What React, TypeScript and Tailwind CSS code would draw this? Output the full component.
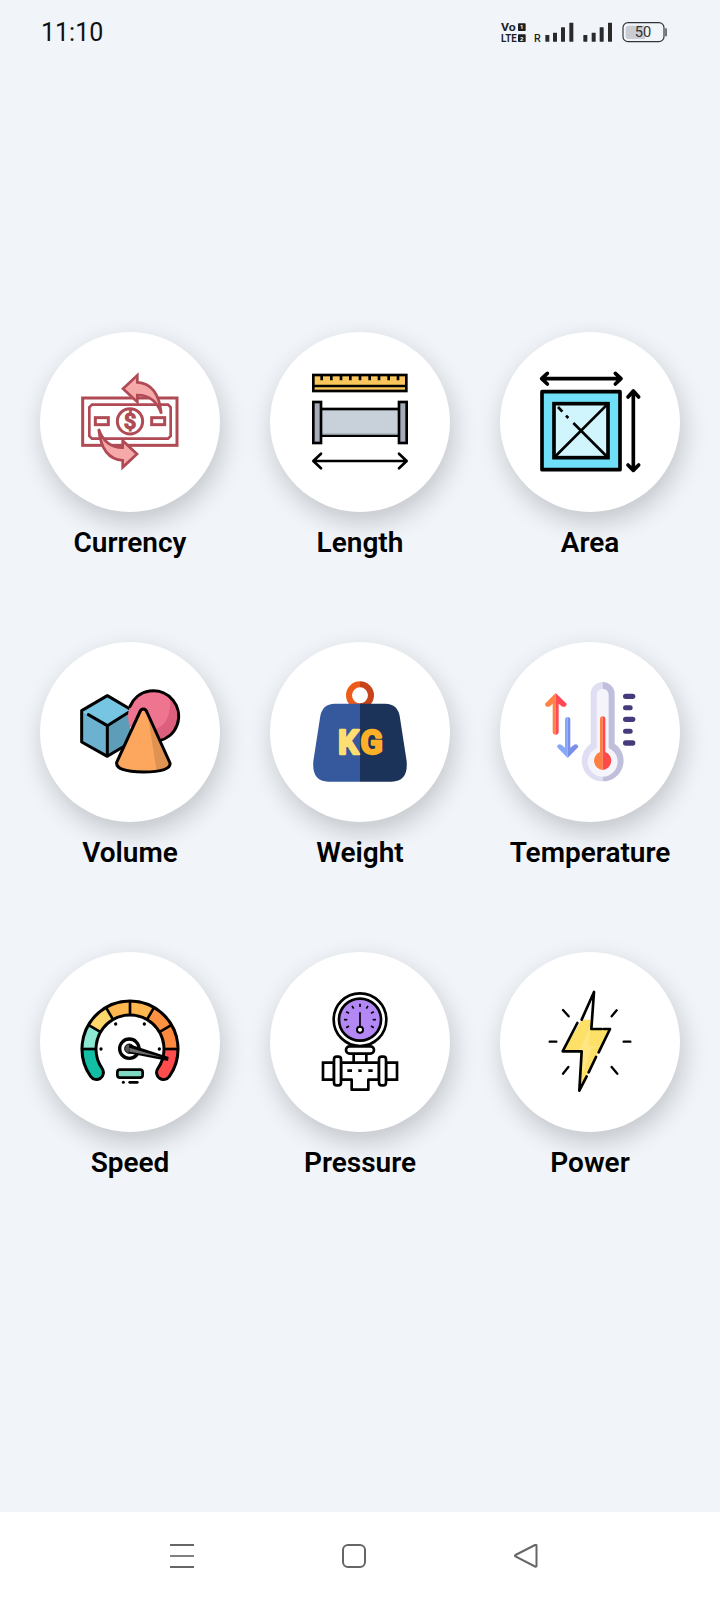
import React from "react";

const VB = "30 37 540 540";
const Svg = ({ children }: { children: React.ReactNode }) => (
  <svg viewBox={VB} className="block w-[180px] h-[180px]">{children}</svg>
);

const Currency = () => {
  const c = "#b04a55";
  const arrow = "M279 207 L322 167 L322 188 Q385 192 394 282 Q375 226 322 226 L322 247 Z";
  return (
    <Svg>
      <rect x="158" y="235" width="283" height="142" fill="#fff" stroke={c} strokeWidth="9" />
      <path d="M186 255 H414 L422 263 V349 L414 357 H186 L178 349 V263 Z" fill="#fff" stroke={c} strokeWidth="8" />
      <circle cx="300" cy="305" r="38" fill="#fff" stroke={c} strokeWidth="9" />
      <text x="300" y="329" textAnchor="middle" fontSize="66" fill={c} stroke={c} strokeWidth="3" className="font-['Roboto'] font-bold">$</text>
      <rect x="196" y="294" width="39" height="21" fill="#fff" stroke={c} strokeWidth="9" />
      <rect x="365" y="294" width="39" height="21" fill="#fff" stroke={c} strokeWidth="9" />
      <path d={arrow} fill="#f5aaa9" stroke={c} strokeWidth="8" strokeLinejoin="miter" />
      <path d={arrow} transform="rotate(180 300 305)" fill="#f5aaa9" stroke={c} strokeWidth="8" strokeLinejoin="miter" />
    </Svg>
  );
};

const Length = () => (
  <Svg>
    <rect x="160" y="166" width="279" height="48" fill="#fbc75c" stroke="#000" strokeWidth="8" />
    <path d="M160 199 H439" stroke="#000" strokeWidth="7" />
    <path d="M185 168 V182 M214 168 V182 M243 168 V182 M271 168 V182 M300 168 V182 M329 168 V182 M357 168 V182 M386 168 V182 M414 168 V182" stroke="#000" strokeWidth="8" />
    <rect x="180" y="268" width="240" height="80" fill="#c8d0d9" stroke="#000" strokeWidth="8" />
    <path d="M183 343 H417" stroke="#a4acb6" strokeWidth="4" />
    <rect x="160" y="247" width="23" height="123" fill="#a5acb8" stroke="#000" strokeWidth="8" />
    <rect x="417" y="247" width="23" height="123" fill="#a5acb8" stroke="#000" strokeWidth="8" />
    <path d="M161 424 H439 M183 402 L160 424 L183 446 M417 402 L440 424 L417 446" fill="none" stroke="#000" strokeWidth="8" strokeLinecap="round" strokeLinejoin="round" />
  </Svg>
);

const Area = () => (
  <Svg>
    <rect x="156" y="216" width="234" height="234" fill="#6fe0f7" stroke="#000" strokeWidth="11" strokeLinejoin="round" />
    <rect x="192" y="252" width="162" height="162" fill="#d1f5fd" stroke="#000" strokeWidth="11" />
    <path d="M355 251 L191 415 M355 415 L250 310" stroke="#000" strokeWidth="8" />
    <path d="M204 262 L217 276 M228 288 L235 295" stroke="#000" strokeWidth="8" />
    <path d="M158 177 H390 M172 161 L155 177 L172 193 M376 161 L393 177 L376 193" fill="none" stroke="#000" strokeWidth="11" strokeLinecap="round" strokeLinejoin="round" />
    <path d="M430 216 V450 M414 232 L430 214 L446 232 M414 436 L430 452 L446 436" fill="none" stroke="#000" strokeWidth="11" strokeLinecap="round" strokeLinejoin="round" />
  </Svg>
);

const Volume = () => (
  <Svg>
    <path d="M232 288 L155 243 V337 L232 380 Z" fill="#6cb2d0" />
    <path d="M232 288 L300 245 V340 L232 380 Z" fill="#5d9db8" />
    <path d="M155 243 L232 198 L300 240 L232 288 Z" fill="#76c5e3" />
    <path d="M155 243 L232 198 L300 238 M155 243 V337 L232 380 L290 345 M175 255 L232 288 V380 M232 288 L296 248" fill="none" stroke="#000" strokeWidth="9" strokeLinejoin="round" strokeLinecap="round" />
    <circle cx="370" cy="260" r="76" fill="#ee7490" />
    <path d="M420 203 A76 76 0 0 1 385 334 L372 300 Q425 285 420 203 Z" fill="#dc5f7e" />
    <path d="M300 230 A76 76 0 1 1 385 334" fill="none" stroke="#000" strokeWidth="9" strokeLinecap="round" />
    <path d="M340 238 L260 400 Q256 426 340 427 Q424 426 420 400 Z" fill="#fca65e" />
    <path d="M355 268 L420 400 Q420 420 380 424 Z" fill="#e09350" />
    <path d="M340 238 Q332 238 328 250 L260 398 Q256 426 340 427 Q424 426 420 400 L352 250 Q348 238 340 238 Z" fill="none" stroke="#000" strokeWidth="9" strokeLinejoin="round" />
  </Svg>
);

const Weight = () => (
  <Svg>
    <path d="M300 155 A42 42 0 0 0 300 239 V221 A24 24 0 0 1 300 173 Z" fill="#ee5a1a" />
    <path d="M300 155 A42 42 0 0 1 300 239 V221 A24 24 0 0 0 300 173 Z" fill="#c7431a" />
    <path d="M300 222 H225 Q185 222 180 265 L160 395 Q155 456 205 456 H300 Z" fill="#36589c" />
    <path d="M300 222 H375 Q415 222 420 265 L440 395 Q445 456 395 456 H300 Z" fill="#1b3358" />
    <text x="265" y="373" textAnchor="middle" fontSize="98" fill="#ffdf72" stroke="#ffdf72" strokeWidth="7" strokeLinejoin="round" className="font-['Roboto'] font-bold">K</text>
    <text x="335" y="373" textAnchor="middle" fontSize="98" fill="#fbb028" stroke="#fbb028" strokeWidth="7" strokeLinejoin="round" className="font-['Roboto'] font-bold">G</text>
  </Svg>
);

const Temperature = () => (
  <Svg>
    <path d="M338 157 A36 36 0 0 0 302 193 V342 A62 62 0 0 0 338 455 Z" fill="#dfdef2" />
    <path d="M338 157 A36 36 0 0 1 374 193 V342 A62 62 0 0 1 338 455 Z" fill="#bfbedb" />
    <path d="M338 177 A18 18 0 0 0 320 195 V355 A45 45 0 1 0 356 355 V195 A18 18 0 0 0 338 177 Z" fill="#f4f4fa" />
    <path d="M338 260 A8 8 0 0 0 330 268 V367 A28 28 0 0 0 338 421 Z" fill="#ff7f40" />
    <path d="M338 260 A8 8 0 0 1 346 268 V367 A28 28 0 0 1 338 421 Z" fill="#ff4a4a" />
    <g fill="#473a7c">
      <rect x="399" y="192" width="37" height="16" rx="8" />
      <rect x="399" y="227" width="29" height="15" rx="7.5" />
      <rect x="399" y="261" width="37" height="16" rx="8" />
      <rect x="399" y="297" width="29" height="15" rx="7.5" />
      <rect x="399" y="332" width="37" height="16" rx="8" />
    </g>
    <path d="M197 190 L165 222 Q166 234 178 231 L188 222 V306 Q188 315 197 315 Z" fill="#ff8246" />
    <path d="M197 190 L230 222 Q229 234 217 231 L206 222 V306 Q206 315 197 315 Z" fill="#ff4a55" />
    <path d="M233 385 L201 352 Q202 341 214 345 L225 354 V270 Q225 262 233 262 Z" fill="#85a9f5" />
    <path d="M233 385 L265 352 Q264 341 252 345 L241 354 V270 Q241 262 233 262 Z" fill="#7c8fe8" />
  </Svg>
);

const SpeedArc = ({ from, to, color, cap }: { from: number; to: number; color: string; cap?: boolean }) => {
  const p = (d: number) => {
    const a = (d * Math.PI) / 180;
    return `${300 - 123 * Math.cos(a)} ${328 - 123 * Math.sin(a)}`;
  };
  return (
    <path
      d={`M${p(from)} A123 123 0 0 1 ${p(to)}`}
      fill="none"
      stroke={color}
      strokeWidth="33"
      strokeLinecap={cap ? "round" : "butt"}
    />
  );
};

const Speed = () => {
  const ends = [0, 30, 60, 90, 120, 150, 180];
  return (
    <Svg>
      <path d="M199.2 398.5 A123 123 0 1 1 400.8 398.5" fill="none" stroke="#000" strokeWidth="51" strokeLinecap="round" />
      <SpeedArc from={-35} to={0} color="#12bfa4" cap />
      <SpeedArc from={180} to={215} color="#ff4d4d" cap />
      <SpeedArc from={0} to={30} color="#8de8d3" />
      <SpeedArc from={30} to={60} color="#ffd76a" />
      <SpeedArc from={60} to={90} color="#fdb74e" />
      <SpeedArc from={90} to={120} color="#fdb74e" />
      <SpeedArc from={120} to={150} color="#ff9240" />
      <SpeedArc from={150} to={180} color="#ff8a3f" />
      {ends.map((d) => {
        const a = (d * Math.PI) / 180;
        return (
          <line key={d} x1={300 - 100 * Math.cos(a)} y1={328 - 100 * Math.sin(a)} x2={300 - 146 * Math.cos(a)} y2={328 - 146 * Math.sin(a)} stroke="#000" strokeWidth="8" />
        );
      })}
      <g fill="#000">
        <circle cx="257" cy="253" r="5" />
        <circle cx="343" cy="253" r="5" />
        <circle cx="213" cy="328" r="5" />
        <circle cx="388" cy="328" r="5" />
      </g>
      <circle cx="298" cy="327" r="29" fill="#fff" stroke="#000" strokeWidth="10" />
      <circle cx="298" cy="327" r="14" fill="#555" stroke="#000" strokeWidth="3" />
      <path d="M298 314 L416 352 L414 364 L296 341 Z" fill="#000" />
      <path d="M298 324 L395 353 L298 336 Z" fill="#6d6d6d" />
      <rect x="262" y="390" width="76" height="24" rx="8" fill="#7fd8c3" stroke="#000" strokeWidth="8" />
      <circle cx="280" cy="428" r="4.5" fill="#000" />
      <rect x="295" y="424" width="31" height="8" rx="4" fill="#000" />
    </Svg>
  );
};

const Pressure = () => {
  const ticks = [-120, -90, -60, -30, 0, 30, 60, 90, 120];
  return (
    <Svg>
      <circle cx="300" cy="240" r="79" fill="#fff" stroke="#000" strokeWidth="8" />
      <circle cx="300" cy="240" r="63" fill="#b388f5" stroke="#000" strokeWidth="8" />
      {ticks.map((t) => (
        <line key={t} x1="300" y1="192" x2="300" y2="202" transform={`rotate(${t} 300 240)`} stroke="#000" strokeWidth="5" />
      ))}
      <path d="M300 218 V262" stroke="#000" strokeWidth="5" />
      <circle cx="300" cy="270" r="9" fill="#fff" stroke="#000" strokeWidth="6" />
      <rect x="281" y="340" width="38" height="32" fill="#fff" stroke="#000" strokeWidth="8" />
      <rect x="258" y="320" width="84" height="22" rx="11" fill="#fff" stroke="#000" strokeWidth="8" />
      <path d="M189 369 H222 V420 H189 Z M378 369 H411 V420 H378 Z" fill="#fff" stroke="#000" strokeWidth="8" />
      <path d="M243 369 H357 V420 H325 V450 H275 V420 H243 Z" fill="#fff" stroke="#000" strokeWidth="8" strokeLinejoin="round" />
      <rect x="222" y="351" width="21" height="86" rx="8" fill="#fff" stroke="#000" strokeWidth="8" />
      <rect x="357" y="351" width="21" height="86" rx="8" fill="#fff" stroke="#000" strokeWidth="8" />
      <path d="M262 393 H276 M295 393 H305 M325 393 H338" stroke="#000" strokeWidth="8" />
    </Svg>
  );
};

const Power = () => (
  <Svg>
    <path d="M275 240 L218 335 H275 L268 453 L360 268 H304 L306 240 Z" fill="#fde067" />
    <path d="M268 330 L300 262 L296 320 L340 318 L305 325 L280 400 Z" fill="#ffe680" />
    <path d="M275 240 L312 157 L304 268 H335 M342 268 H360 L326 338 M318 352 L296 398 M290 410 L268 453 L275 335 H218 L262 250" fill="none" stroke="#000" strokeWidth="8" strokeLinejoin="round" strokeLinecap="round" />
    <path d="M219 211 L236 230 M380 212 L365 230 M179 306 H199 M401 306 H421 M235 382 L219 402 M365 382 L382 402" stroke="#000" strokeWidth="7" strokeLinecap="round" />
  </Svg>
);

const items: { label: string; Icon: () => React.ReactElement }[] = [
  { label: "Currency", Icon: Currency },
  { label: "Length", Icon: Length },
  { label: "Area", Icon: Area },
  { label: "Volume", Icon: Volume },
  { label: "Weight", Icon: Weight },
  { label: "Temperature", Icon: Temperature },
  { label: "Speed", Icon: Speed },
  { label: "Pressure", Icon: Pressure },
  { label: "Power", Icon: Power },
];

const StatusIcons = () => (
  <svg viewBox="0 0 570 135" className="block w-[190px] h-[45px]">
    <g fill="#1f1f1f" className="font-['Roboto'] font-bold">
      <text x="33" y="62" fontSize="32" textLength="44" lengthAdjust="spacingAndGlyphs">Vo</text>
      <rect x="84" y="40" width="23" height="23" rx="2" />
      <text x="33" y="95" fontSize="32" textLength="47" lengthAdjust="spacingAndGlyphs">LTE</text>
      <rect x="84" y="73" width="23" height="23" rx="2" />
      <text x="95.5" y="92" textAnchor="middle" fontSize="18" fill="#fff">2</text>
      <text x="95.5" y="58" textAnchor="middle" fontSize="18" fill="#fff">1</text>
      <text x="132" y="97" fontSize="32" fontWeight="500">R</text>
    </g>
    <g fill="#2a2a2a">
      <rect x="166" y="75" width="12" height="20" rx="1" />
      <rect x="189" y="68" width="12" height="27" rx="1" />
      <rect x="213" y="52" width="12" height="43" rx="1" />
      <rect x="238" y="38" width="12" height="57" rx="1" />
      <rect x="280" y="75" width="12" height="20" rx="1" />
      <rect x="305" y="68" width="12" height="27" rx="1" />
      <rect x="329" y="52" width="12" height="43" rx="1" />
      <rect x="354" y="38" width="12" height="57" rx="1" />
    </g>
    <rect x="399" y="38" width="123" height="57" rx="15" fill="none" stroke="#333" strokeWidth="3.5" />
    <path d="M417 47 H465 V87 H417 Q407 87 407 77 V57 Q407 47 417 47 Z" fill="#c9ccd2" />
    <rect x="526" y="55" width="4" height="24" rx="1" fill="#333" />
    <text x="459" y="82" textAnchor="middle" fontSize="44" fill="#333" className="font-['Roboto']">50</text>
  </svg>
);

export default function App() {
  return (
    <div className="h-[1600px] w-[720px] flex flex-col bg-[#f1f5fa] font-['Roboto',sans-serif] overflow-hidden">
      <div className="h-[64px] flex items-center justify-between pl-[41px] pr-[40px] pt-[1px] shrink-0">
        <span className="text-[25px] leading-none text-[#111]">11:10</span>
        <StatusIcons />
      </div>
      <main className="flex-1 px-[15px] pt-[268px]">
        <div className="grid grid-cols-3 gap-y-[82px]">
          {items.map(({ label, Icon }) => (
            <div key={label} className="flex flex-col items-center">
              <div className="w-[180px] h-[180px] rounded-full bg-white shadow-[3px_10px_26px_rgba(0,0,0,0.2)]">
                <Icon />
              </div>
              <div className="mt-[13px] h-[35px] leading-[35px] text-[28px] font-semibold text-black">{label}</div>
            </div>
          ))}
        </div>
      </main>
      <nav className="h-[88px] bg-white relative shrink-0">
        <div className="absolute left-[170px] top-[32px] w-[24px] h-[24px] flex flex-col justify-between">
          <div className="h-[2px] bg-[#666]" />
          <div className="h-[2px] bg-[#808080]" />
          <div className="h-[2px] bg-[#666]" />
        </div>
        <div className="absolute left-[342px] top-[32px] w-[24px] h-[24px] rounded-[6px] border-2 border-[#666]" />
        <svg viewBox="0 0 24 24" className="absolute left-[514px] top-[32px] w-[24px] h-[24px]">
          <path d="M22.5 1.5 V22 Q22.5 23 21 22.5 L1.5 12.5 Q0.5 11.5 1.5 11 L21 1 Q22.5 0.5 22.5 1.5 Z" fill="none" stroke="#666" strokeWidth="2" />
        </svg>
      </nav>
    </div>
  );
}
